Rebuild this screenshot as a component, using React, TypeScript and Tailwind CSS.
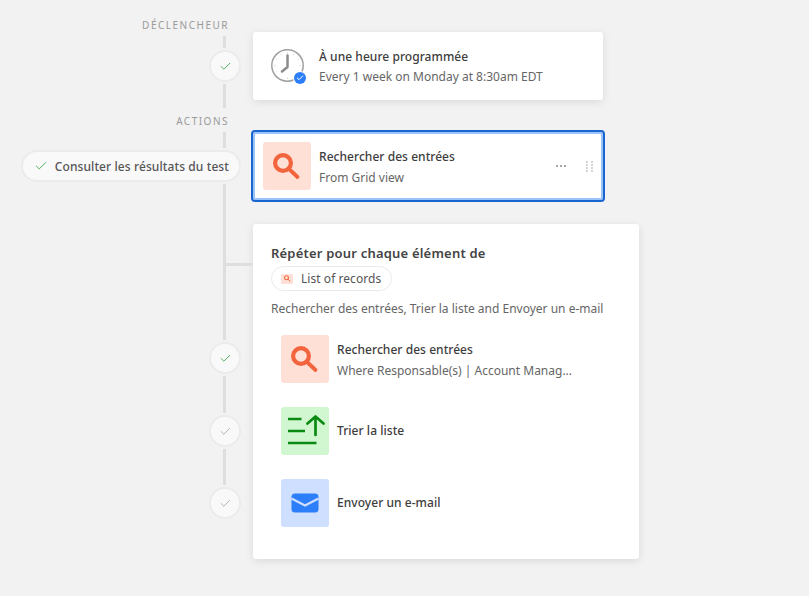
import { Check } from "lucide-react";

const font = "font-['Noto_Sans',sans-serif]";

const Segment = ({ h }: { h: string }) => (
  <div className={`w-[3px] mr-[15px] bg-[#dedede] ${h}`} />
);

const StepLabel = ({ text, className }: { text: string; className: string }) => (
  <div className={`mr-[12px] h-[14px] text-[10px] leading-[14px] tracking-[1.5px] text-[#9a9a9a] ${className}`}>
    {text}
  </div>
);

const Dot = ({ done, className }: { done?: boolean; className: string }) => (
  <div
    className={`flex h-[32px] w-[32px] items-center justify-center rounded-full border-2 border-[#ebebeb] bg-[#f9f9f9] ${className}`}
  >
    <Check
      size={13}
      strokeWidth={done ? 1.5 : 1.2}
      className={done ? "text-[#2e9e3f]" : "text-[#8f8f8f]"}
    />
  </div>
);

const SearchIcon = ({ size }: { size: number }) => (
  <svg width={size} height={size} viewBox="0 0 28 28" fill="none">
    <circle cx="10" cy="11" r="7.9" stroke="#f2643d" strokeWidth="4.2" />
    <path d="M15.5 16.5l9 8.5" stroke="#f2643d" strokeWidth="3.8" strokeLinecap="round" />
  </svg>
);

const SortIcon = () => (
  <svg width="40" height="32" viewBox="0 0 40 32" fill="none" stroke="#0a8a12" strokeWidth="2.7">
    <path d="M3 4h13.5M3 16h17M3 28h28.5" />
    <path d="M30.5 20V1.5M22.5 8.5l8-7 8 7" strokeLinecap="round" strokeLinejoin="round" />
  </svg>
);

const MailIcon = () => (
  <svg width="28" height="20" viewBox="0 0 28 20" fill="none">
    <rect x="0.5" y="0.5" width="27" height="19" rx="3.5" fill="#2d7ff9" />
    <path d="M0.5 5.5l13.5 7 13.5-7" stroke="#cfdfff" strokeWidth="2.2" />
  </svg>
);

const ClockIcon = () => (
  <div className="relative h-[36px] w-[36px] shrink-0 pt-[1px]">
    <svg width="33" height="33" viewBox="0 0 33 33" fill="none">
      <circle cx="16.5" cy="16.5" r="15.7" stroke="#a0a0a0" strokeWidth="1.5" />
      <path
        d="M16.5 3v2M16.5 28v2M3 16.5h2M28 16.5h2M9.8 5l.8 1.4M23.2 5l-.8 1.4M5 9.8l1.4.8M5 23.2l1.4-.8M28 9.8l-1.4.8"
        stroke="#e2e2e2"
        strokeWidth="1"
      />
      <path d="M16.5 6.5V18l-5.5 4.5" stroke="#8c8c8c" strokeWidth="2.5" strokeLinecap="round" strokeLinejoin="round" />
    </svg>
    <div className="absolute bottom-0 right-[1px] flex h-[12px] w-[12px] items-center justify-center rounded-full bg-[#2d7ff9] ring-1 ring-white">
      <Check size={8} strokeWidth={3} className="text-white" />
    </div>
  </div>
);

const IconBox = ({ className, children }: { className: string; children: React.ReactNode }) => (
  <div className={`flex h-[48px] w-[48px] shrink-0 items-center justify-center rounded-[3px] ${className}`}>
    {children}
  </div>
);

const LoopRow = ({ bg, icon, title, sub }: { bg: string; icon: React.ReactNode; title: string; sub?: string }) => (
  <div className="flex h-[48px] items-center gap-[8px]">
    <IconBox className={bg}>{icon}</IconBox>
    <div className={sub ? "pt-[2px]" : ""}>
      <p className="text-[12px] leading-[18px] font-medium tracking-[0.05px] text-[#3d3d3d]">{title}</p>
      {sub && <p className="mt-[3px] text-[12px] leading-[18px] text-[#666666]">{sub}</p>}
    </div>
  </div>
);

export default function App() {
  return (
    <div className={`flex h-[596px] w-full overflow-hidden bg-[#f2f2f2] ${font}`}>
      <div className="flex w-[241px] shrink-0 flex-col items-end pt-[18px]">
        <StepLabel text="DÉCLENCHEUR" className="mb-[4px]" />
        <Segment h="h-[12px]" />
        <Dot done className="my-[2px]" />
        <Segment h="h-[24px]" />
        <StepLabel text="ACTIONS" className="mt-[6px] mb-[4px]" />
        <Segment h="h-[16px]" />
        <div className="my-[2px] flex h-[32px] items-center gap-[7px] rounded-full border-2 border-[#ebebeb] bg-[#f9f9f9] pl-[11px] pr-[10px]">
          <Check size={14} strokeWidth={1.4} className="text-[#2e9e3f]" />
          <span className="pt-[1px] text-[12px] font-medium tracking-[0.1px] text-[#555555]">Consulter les résultats du test</span>
        </div>
        <Segment h="h-[156px]" />
        <Dot done className="my-[2px]" />
        <Segment h="h-[37px]" />
        <Dot className="my-[2px]" />
        <Segment h="h-[36px]" />
        <Dot className="my-[2px]" />
      </div>
      <div className="ml-[12px] flex w-[386px] flex-col pt-[32px]">
        <div className="flex h-[68px] w-[350px] items-center gap-[12px] rounded-[3px] bg-white pl-[18px] shadow-[0_2px_8px_rgba(0,0,0,0.1)]">
          <ClockIcon />
          <div className="pt-[2px]">
            <p className="text-[12px] leading-[18px] font-medium tracking-[0.05px] text-[#3d3d3d]">À une heure programmée</p>
            <p className="mt-[2px] text-[12px] leading-[18px] text-[#666666]">Every 1 week on Monday at 8:30am EDT</p>
          </div>
        </div>
        <div className="mt-[30px] ml-[-2px] flex h-[72px] w-[354px] items-center rounded-[4px] border-2 border-[#1a66d0] bg-white pl-[10px] pr-[10px] ring-2 ring-inset ring-[#9cc3f7]">
          <IconBox className="bg-[#ffe0d6]"><SearchIcon size={28} /></IconBox>
          <div className="ml-[8px] pt-[2px]">
            <p className="text-[12px] leading-[18px] font-medium tracking-[0.05px] text-[#3d3d3d]">Rechercher des entrées</p>
            <p className="mt-[3px] text-[12px] leading-[18px] text-[#666666]">From Grid view</p>
          </div>
          <span className="ml-auto mr-[20px] flex gap-[2px]">
            <i className="h-[2px] w-[2px] rounded-full bg-[#888888]" />
            <i className="h-[2px] w-[2px] rounded-full bg-[#888888]" />
            <i className="h-[2px] w-[2px] rounded-full bg-[#888888]" />
          </span>
          <span className="grid grid-cols-2 gap-x-[3px] gap-y-[1px]">
            {[0, 1, 2, 3, 4, 5, 6, 7].map((n) => (
              <i key={n} className="h-[2px] w-[2px] bg-[#d4d4d4]" />
            ))}
          </span>
        </div>
        <div className="relative mt-[22px] h-[335px] w-[386px] rounded-[3px] bg-white px-[18px] pt-[20px] shadow-[0_2px_8px_rgba(0,0,0,0.1)]">
          <div className="absolute left-[-27px] top-[39px] h-[3px] w-[27px] bg-[#dedede]" />
          <p className="text-[13px] leading-[18px] font-semibold tracking-[0.2px] text-[#444444]">Répéter pour chaque élément de</p>
          <div className="mt-[4px] flex h-[25px] w-[121px] items-center gap-[8px] rounded-full border border-[#ebebeb] pl-[9px]">
            <div className="flex h-[10px] w-[12px] items-center justify-center rounded-[1px] bg-[#ffe0d6]">
              <SearchIcon size={7} />
            </div>
            <span className="text-[12px] tracking-[0.05px] text-[#555555]">List of records</span>
          </div>
          <p className="mt-[9px] text-[12px] leading-[18px] text-[#666666]">Rechercher des entrées, Trier la liste and Envoyer un e-mail</p>
          <div className="mt-[17px] ml-[10px] flex flex-col gap-[24px]">
            <LoopRow
              bg="bg-[#ffe0d6]"
              icon={<SearchIcon size={28} />}
              title="Rechercher des entrées"
              sub="Where Responsable(s) | Account Manag..."
            />
            <LoopRow bg="bg-[#d1f7d1]" icon={<SortIcon />} title="Trier la liste" />
            <LoopRow bg="bg-[#cfdfff]" icon={<MailIcon />} title="Envoyer un e-mail" />
          </div>
        </div>
      </div>
    </div>
  );
}
